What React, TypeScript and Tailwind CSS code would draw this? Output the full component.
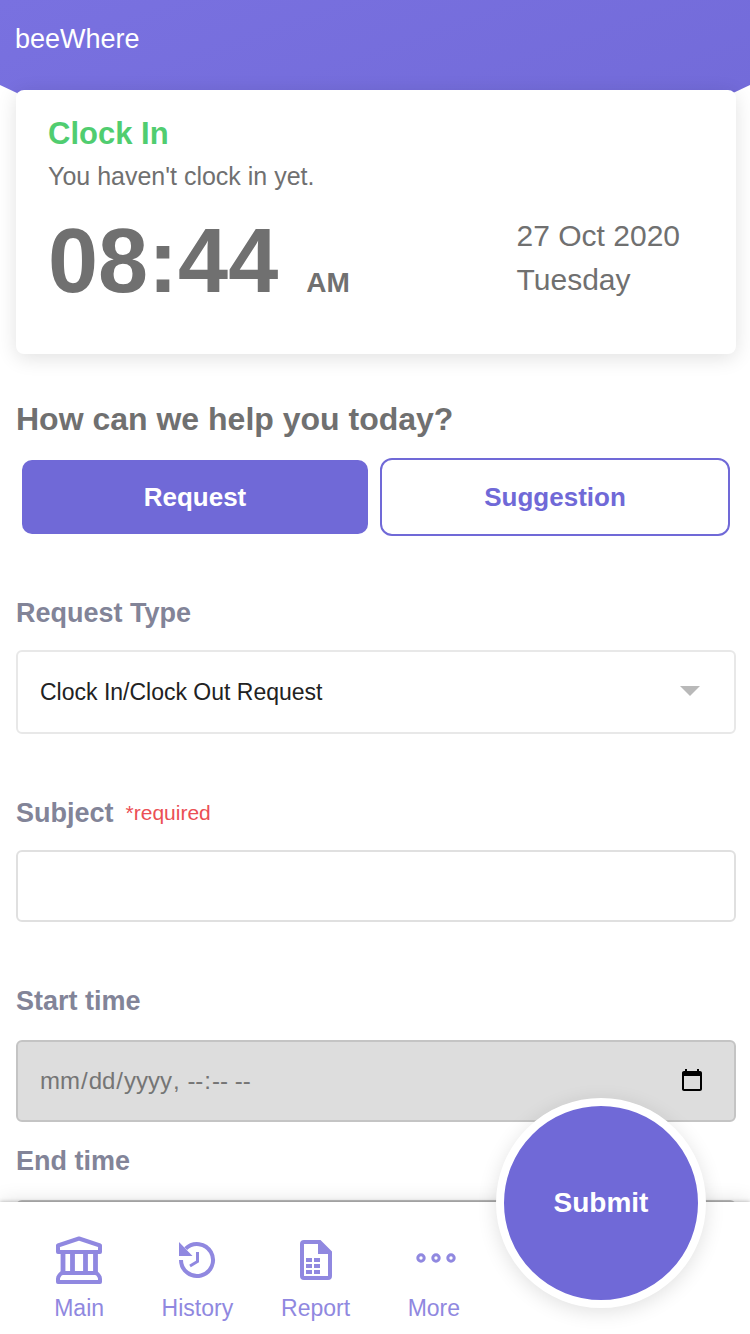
import { useState, type ReactNode } from "react";

const labelClass = "block text-[27px] leading-8 font-bold text-[#828498]";
const timeClass =
  "block h-[82px] w-full rounded-md border-2 border-[#c4c4c4] bg-[#dddddd] pl-[21px] pr-[29px] text-[24px] text-[#757575] outline-none [&::-webkit-calendar-picker-indicator]:m-0 [&::-webkit-calendar-picker-indicator]:size-[26px] [&::-webkit-calendar-picker-indicator]:p-0";

function MainIcon() {
  return (
    <svg viewBox="0 0 48 48" className="size-12" fill="none" stroke="currentColor" strokeWidth="4" strokeLinejoin="round" aria-hidden="true">
      <path d="M3 9.500 24 2.500l21 7V16H3z" />
      <path d="M8 17v19M17.500 17v19M30.500 17v19M40.500 17v19" strokeWidth="4.800" />
      <path d="M8 37h32q2 0 3 1.500l1 1.500q1 1 1 3v3H3v-3q0-2 1-3l1-1.500q1-1.500 3-1.500z" />
    </svg>
  );
}

function HistoryIcon() {
  return (
    <svg viewBox="0 0 48 48" className="size-12" fill="none" stroke="currentColor" strokeWidth="4" aria-hidden="true">
      <path d="M8 24a16 16 0 1 0 4.700-11.300" />
      <path d="M6 6v14h13.500z" fill="currentColor" stroke="none" />
      <path d="M24.500 16v9.500L17 30" strokeWidth="3" />
    </svg>
  );
}

function ReportIcon() {
  return (
    <svg viewBox="0 0 48 48" className="size-12" fill="currentColor" aria-hidden="true">
      <path fillRule="evenodd" d="M12 4h16.500L40 15.500V40a4 4 0 0 1-4 4H12a4 4 0 0 1-4-4V8a4 4 0 0 1 4-4zm0 4v32h24V18H26V8z" />
      <path d="M14 22h6v4h-6zM22 22h6v4h-6zM14 28h6v4h-6zM22 28h6v4h-6zM14 34h6v4h-6zM22 34h6v4h-6z" />
    </svg>
  );
}

function MoreIcon() {
  return (
    <svg viewBox="0 0 48 48" className="size-12" fill="none" stroke="currentColor" strokeWidth="3" aria-hidden="true">
      <circle cx="11" cy="22" r="3.200" />
      <circle cx="26" cy="22" r="3.200" />
      <circle cx="41" cy="22" r="3.200" />
    </svg>
  );
}

function NavItem({ label, children }: { label: string; children: ReactNode }) {
  return (
    <a href="#" className="flex flex-col items-center gap-2.5 text-[23px] leading-7 text-[#9088e0]">
      {children}
      {label}
    </a>
  );
}

export default function App() {
  const [subject, setSubject] = useState("");

  return (
    <div className="flex h-screen flex-col overflow-hidden bg-white font-['Liberation_Sans',Arial,sans-serif] text-[#707070]">
      <main className="min-h-0 flex-1 overflow-y-auto [scrollbar-width:none]">
        <header className="-mb-[172px] h-[262px] bg-linear-to-br from-[#7971e0] to-[#7068d6] px-[15px] pt-[23px] text-white [clip-path:polygon(0_0,100%_0,100%_85px,50%_100%,0_85px)]">
          <h1 className="text-[27px] leading-8">beeWhere</h1>
        </header>

        <div className="pr-3.5 pb-8 pl-4">
          <section className="relative h-[264px] rounded-lg bg-white px-8 pt-6 shadow-[0_4px_20px_rgba(0,0,0,0.12)]">
            <h2 className="text-[31px] leading-10 font-bold text-[#50cd70]">Clock In</h2>
            <p className="text-[25px] leading-11">You haven't clock in yet.</p>
            <div className="mt-4 flex items-start justify-between pr-6">
              <p className="flex items-baseline gap-7 font-bold">
                <span className="text-[90px] leading-[94px]">08:44</span>
                <span className="text-[28px]">AM</span>
              </p>
              <p className="text-[30px] leading-11">
                27 Oct 2020
                <br />
                Tuesday
              </p>
            </div>
          </section>

          <h2 className="mt-[43px] text-[32px] leading-11 font-bold">How can we help you today?</h2>
          <div className="mt-[17px] grid grid-cols-2 gap-2.5 pr-1.5 pl-1 text-[26px] font-bold">
            <button type="button" className="h-[78px] rounded-xl border-2 border-transparent bg-[#7069d7] bg-clip-padding text-white">
              Request
            </button>
            <button type="button" className="h-[78px] rounded-xl border-2 border-[#7069d7] text-[#7069d7]">
              Suggestion
            </button>
          </div>

          <form className="mt-[61px]">
            <label htmlFor="type" className={labelClass}>
              Request Type
            </label>
            <div className="relative mt-[21px]">
              <select id="type" className="block h-[84px] w-full appearance-none rounded-md border-2 border-[#e8e8e8] bg-white px-[22px] text-[23px] text-[#222222]">
                <option>Clock In/Clock Out Request</option>
              </select>
              <svg viewBox="0 0 20 10" className="pointer-events-none absolute top-9 right-9 h-2.5 w-5 fill-[#b9b9b9]" aria-hidden="true">
                <path d="M0 0h20L10 10z" />
              </svg>
            </div>

            <label htmlFor="subject" className="mt-[63px] flex items-center gap-3 text-[27px] leading-8 font-bold text-[#828498]">
              Subject
              <span className="text-[21px] font-normal text-[#eb4f54]">*required</span>
            </label>
            <input
              id="subject"
              value={subject}
              onChange={(event) => setSubject(event.target.value)}
              className="mt-[21px] block h-[72px] w-full rounded-md border-2 border-[#e0e0e0] px-[22px] text-[23px] text-[#222222] outline-none"
            />

            <label htmlFor="start" className={`mt-[63px] mb-[23px] ${labelClass}`}>
              Start time
            </label>
            <input id="start" type="datetime-local" className={timeClass} />

            <label htmlFor="end" className={`mt-[23px] mb-[23px] ${labelClass}`}>
              End time
            </label>
            <input id="end" type="datetime-local" className={timeClass} />
          </form>
        </div>
      </main>

      <nav className="relative bg-white pt-[34px] pb-3 shadow-[0_0_4px_rgba(0,0,0,0.3),0_0_20px_rgba(0,0,0,0.12)]">
        <div className="mr-[34%] ml-5 grid grid-cols-4 pr-0.5">
          <NavItem label="Main">
            <MainIcon />
          </NavItem>
          <NavItem label="History">
            <HistoryIcon />
          </NavItem>
          <NavItem label="Report">
            <ReportIcon />
          </NavItem>
          <NavItem label="More">
            <MoreIcon />
          </NavItem>
        </div>
        <button
          type="button"
          className="absolute right-11 bottom-[26px] size-[210px] rounded-full border-8 border-white bg-[#7069d7] text-[28px] font-bold text-white shadow-[0_4px_20px_rgba(0,0,0,0.12)]"
        >
          Submit
        </button>
      </nav>
    </div>
  );
}
